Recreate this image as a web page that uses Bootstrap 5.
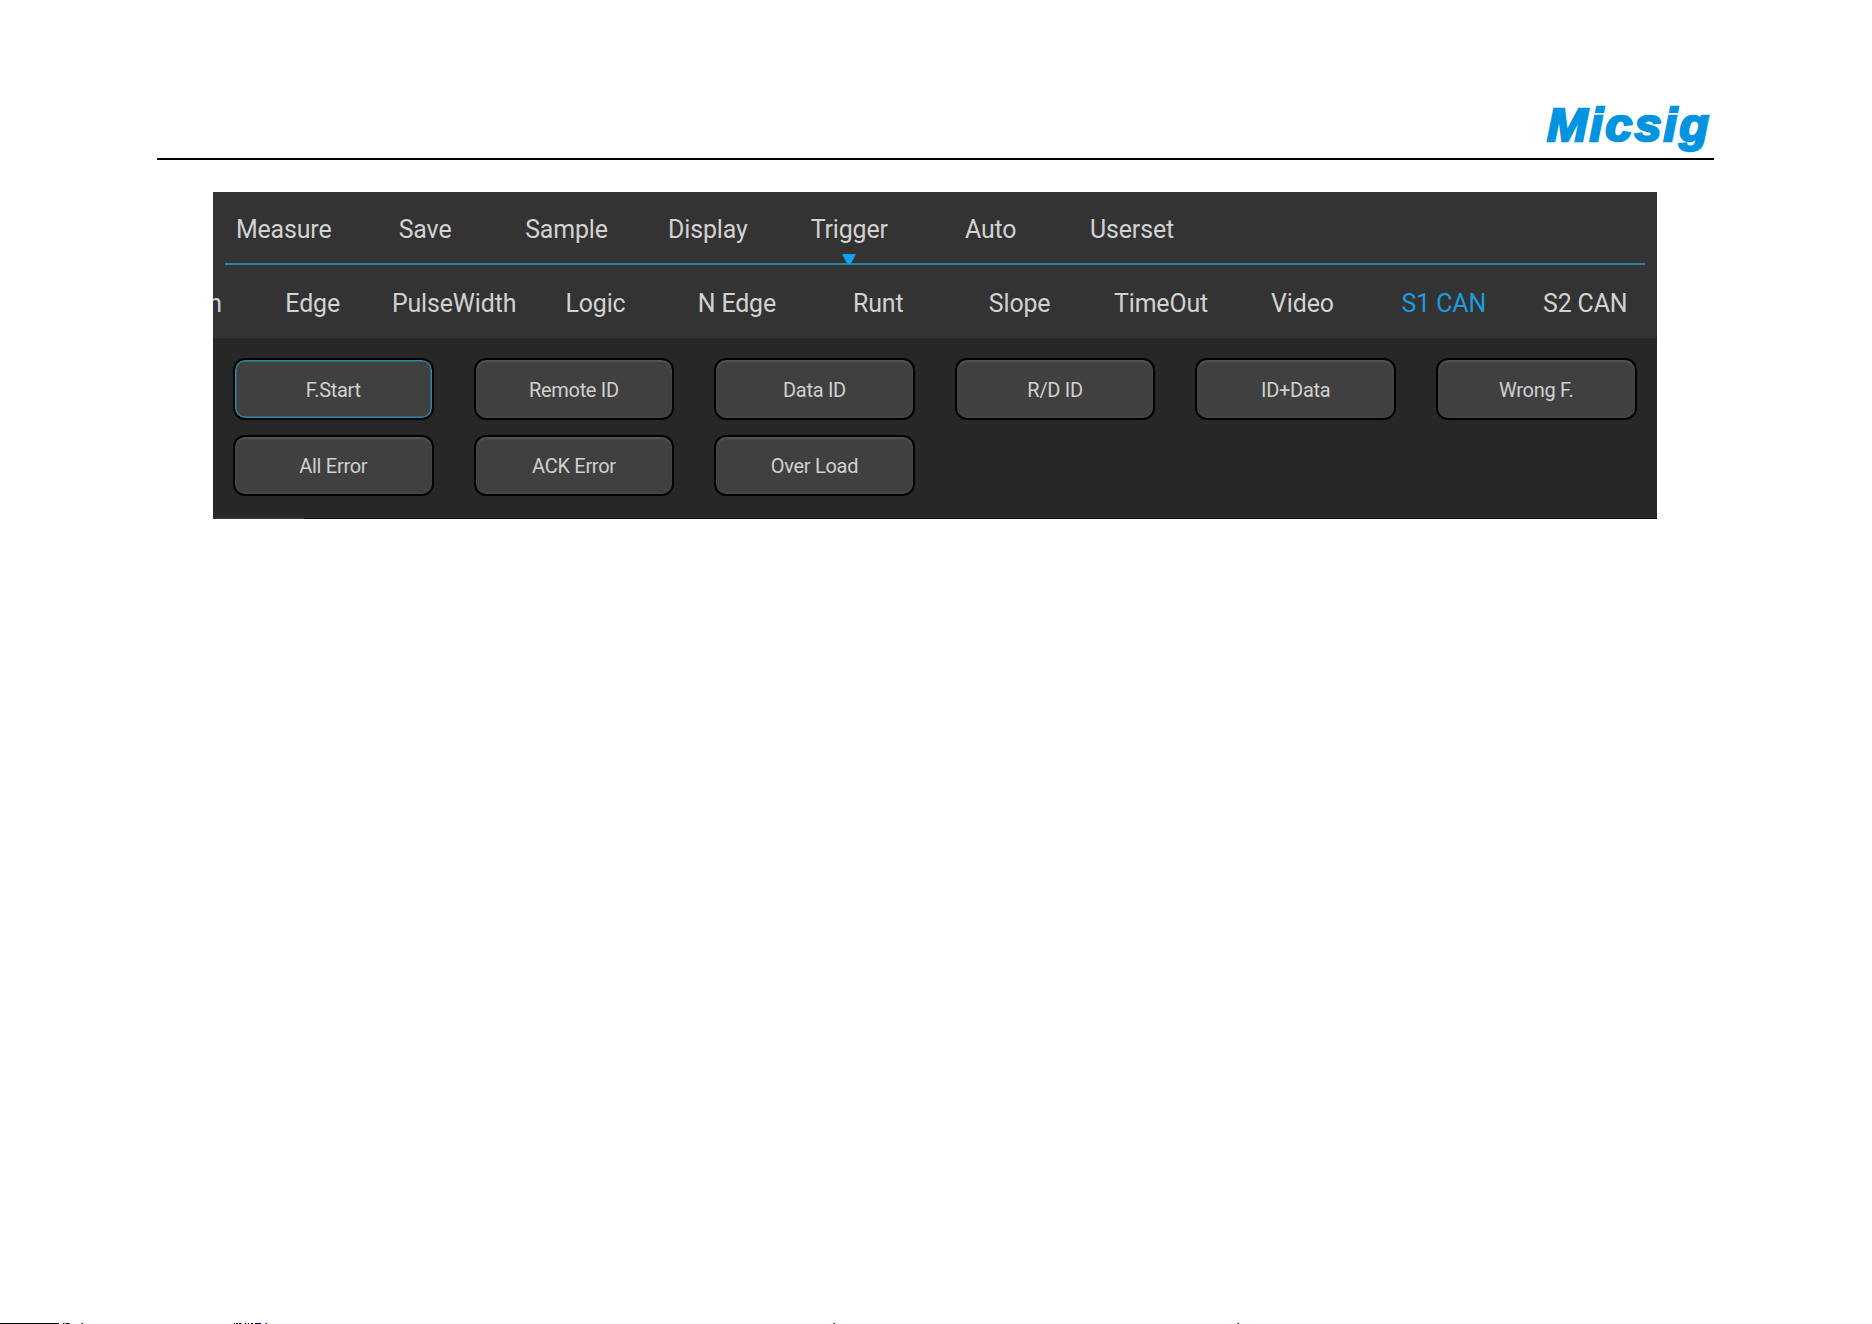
<!DOCTYPE html>
<html lang="en">
<head>
    <meta charset="UTF-8">
    <meta name="viewport" content="width=device-width, initial-scale=1.0">
    <title>Micsig - Trigger S1 CAN</title>

    <link href="https://cdn.jsdelivr.net/npm/bootstrap@5.3.0/dist/css/bootstrap.min.css" rel="stylesheet">
    <style>
        body {
            font-family: Roboto, "Liberation Sans", sans-serif;
            background: #fff;
            height: 1324px;
            overflow: hidden;
        }

        /* page header */
        .page-head {
            height: 160px;
            margin: 0 158px 0 157px;
            border-bottom: 2px solid #000;
        }

        .brand-logo text {
            font-family: "Liberation Sans", Arial, sans-serif;
            font-weight: 700;
            font-style: italic;
            font-size: 46px;
            letter-spacing: 2px;
            fill: #0093e0;
            stroke: #0093e0;
            stroke-width: 2.4px;
        }

        /* oscilloscope menu */
        .scope {
            width: 1444px;
            height: 327px;
            margin: 32px 0 0 213px;
            background: #272727;
            color: #d2d2d2;
        }

        .scope-tabs {
            height: 146px;
            background: #333;
            font-size: 24.9px;
            letter-spacing: -0.12px;
            line-height: 28px;
        }

        .main-tabs {
            height: 71px;
            padding-top: 24px;
        }

        .tab-line {
            height: 2px;
            margin: 0 12px;
            background: #2187a3;
        }

        .tab-cell {
            flex: 0 0 141.4px;
            text-align: center;
            white-space: nowrap;
        }

        .tab-arrow {
            left: 50%;
            top: 38px;
            margin-left: -7px;
        }

        .sub-tabs {
            padding-top: 25px;
        }

        .cut-cell {
            width: 29px;
            padding-right: 20px;
        }

        .tab-on {
            color: #1c9be0;
        }

        .key-grid {
            display: grid;
            grid-template-columns: repeat(6, 200.6px);
            gap: 15px 40px;
            height: 179px;
            align-content: start;
            padding: 20px 0 0 20px;
        }

        .key {
            height: 61.5px;
            border: 2px solid #000;
            border-radius: 12px;
            background: #404040;
            box-shadow: inset 0 2px 2px #555, inset 0 -1px 2px #4a4a4a;
            font-size: 20px;
            letter-spacing: -0.3px;
            line-height: 24px;
            color: #d0d0d0;
            padding: 2px 0 0;
        }

        .key-on {
            box-shadow: inset 0 0 0 1.5px #2e86a9;
        }

        /* bottom edge, grey up to the scroll mark and black after it */
        .scope-edge {
            height: 2px;
            border-top: 1px solid #333;
            background: linear-gradient(90deg, #333 91px, #000 91px);
        }

        /* sliver of the task bar */
        .foot-strip {
            height: 1px;
            margin-top: 804px;
        }
    </style>
</head>
<body>

<header class="page-head d-flex justify-content-end align-items-end">
    <svg class="brand-logo" width="184" height="70" viewBox="0 0 184 70">
        <text x="17" y="52.5" textLength="164" lengthAdjust="spacingAndGlyphs">Micsig</text>
    </svg>
</header>

<main class="scope">
    <div class="scope-tabs">
        <nav class="main-tabs d-flex">
            <div class="tab-cell">Measure</div>
            <div class="tab-cell">Save</div>
            <div class="tab-cell">Sample</div>
            <div class="tab-cell">Display</div>
            <div class="tab-cell position-relative">Trigger
                <svg class="tab-arrow position-absolute" width="14" height="11" viewBox="0 0 14 11"><path d="M0 0H14L9 9.5Q7 11 5 9.5Z" fill="#12a0f5"/></svg>
            </div>
            <div class="tab-cell">Auto</div>
            <div class="tab-cell">Userset</div>
        </nav>
        <div class="tab-line"></div>
        <nav class="sub-tabs d-flex">
            <div class="cut-cell d-flex justify-content-end overflow-hidden"><span>n</span></div>
            <div class="tab-cell">Edge</div>
            <div class="tab-cell">PulseWidth</div>
            <div class="tab-cell">Logic</div>
            <div class="tab-cell">N Edge</div>
            <div class="tab-cell">Runt</div>
            <div class="tab-cell">Slope</div>
            <div class="tab-cell">TimeOut</div>
            <div class="tab-cell">Video</div>
            <div class="tab-cell tab-on">S1 CAN</div>
            <div class="tab-cell">S2 CAN</div>
        </nav>
    </div>

    <div class="key-grid">
        <button class="key key-on">F.Start</button>
        <button class="key">Remote ID</button>
        <button class="key">Data ID</button>
        <button class="key">R/D ID</button>
        <button class="key">ID+Data</button>
        <button class="key">Wrong F.</button>
        <button class="key">All Error</button>
        <button class="key">ACK Error</button>
        <button class="key">Over Load</button>
    </div>
    <div class="scope-edge"></div>
</main>

<svg class="foot-strip d-block" width="1872" height="1" viewBox="0 0 1872 1">
    <path d="M0 .5H58M63 .5H64M66 .5H69M236 .5H238M239 .5H241M245 .5H246M248 .5H249M251 .5H253M255 .5H261" stroke="#000"/>
    <path d="M58 .5H59M82 .5H83M234 .5H235M257 .5H259M266 .5H267M834 .5H835M1238 .5H1239" stroke="#1500c8"/>
    <path d="M64 .5H65M69 .5H70M81 .5H82M265 .5H266M833 .5H834M1237 .5H1238" stroke="#c87814"/>
    <path d="M65 .5H66M241 .5H242M246 .5H247" stroke="#5cc8d8"/>
</svg>

<script src="https://cdn.jsdelivr.net/npm/bootstrap@5.3.0/dist/js/bootstrap.bundle.min.js"></script>
</body>
</html>
